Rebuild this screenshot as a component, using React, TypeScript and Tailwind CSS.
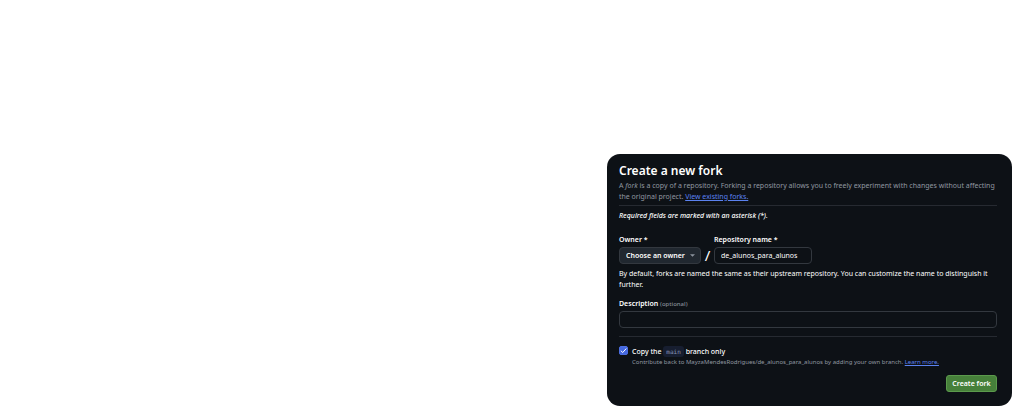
import { useState } from "react";

function Divider() {
  return <hr className="border-t border-[#262a31]" />;
}

function OwnerSelect() {
  return (
    <div className="relative">
      <select
        id="owner"
        defaultValue=""
        className="block h-[17px] w-[82px] appearance-none rounded-[4px] border border-[#33383f] bg-[#212830] px-[6px] text-[7px] leading-[15px] font-semibold text-white"
      >
        <option value="">Choose an owner</option>
      </select>
      <svg
        viewBox="0 0 6 3"
        className="pointer-events-none absolute top-[7px] right-[6px] h-[3px] w-[5px] fill-[#8b939d]"
        aria-hidden="true"
      >
        <path d="M0 0h6L3 3z" />
      </svg>
    </div>
  );
}

function BranchCheckbox() {
  const [checked, setChecked] = useState(true);
  return (
    <span className="relative block size-[9px] shrink-0">
      <input
        id="main-only"
        type="checkbox"
        checked={checked}
        onChange={(event) => setChecked(event.target.checked)}
        className="block size-[9px] appearance-none rounded-[2px] border border-[#4c6ee0] checked:bg-[#4468e0]"
      />
      {checked && (
        <svg
          viewBox="0 0 9 9"
          className="pointer-events-none absolute inset-0 size-[9px] fill-none stroke-white"
          aria-hidden="true"
        >
          <path d="M1.8 4.7 3.7 6.5 7.3 2.5" strokeWidth="1" />
        </svg>
      )}
    </span>
  );
}

export default function App() {
  return (
    <main className="flex min-h-screen items-start justify-end bg-white pt-[154px] font-['Noto_Sans','Open_Sans',sans-serif] text-[7px] leading-[11px] text-white">
      <form
        className="w-2/5 min-w-[405px] rounded-[13px] bg-[#0d1116] pt-[8px] pr-[15px] pb-[14px] pl-[12px]"
        onSubmit={(event) => event.preventDefault()}
      >
        <h1 className="text-[12px] leading-[18px] font-semibold">Create a new fork</h1>
        <p className="mb-[3px] text-[#9198a1]">
          A <em>fork</em> is a copy of a repository. Forking a repository allows you to freely experiment
          with changes without affecting the original project.{" "}
          <a href="#forks" className="text-[#5b82f0] underline">
            View existing forks.
          </a>
        </p>
        <Divider />
        <p className="mt-[4px] font-medium italic">Required fields are marked with an asterisk (*).</p>

        <div className="mt-[13px] flex items-end">
          <div>
            <label htmlFor="owner" className="mb-[2px] block font-semibold">
              Owner *
            </label>
            <OwnerSelect />
          </div>
          <span className="w-[13px] text-center text-[15px] leading-[17px]">/</span>
          <div>
            <label htmlFor="repo-name" className="mb-[2px] block font-semibold">
              Repository name *
            </label>
            <input
              id="repo-name"
              type="text"
              defaultValue="de_alunos_para_alunos"
              className="block h-[17px] w-[98px] rounded-[4px] border border-[#33383f] bg-[#0d1116] px-[6px] text-[7px] text-white"
            />
          </div>
        </div>
        <p className="mt-[4px]">
          By default, forks are named the same as their upstream repository. You can customize the name to
          distinguish it further.
        </p>

        <label htmlFor="description" className="mt-[8px] mb-px block font-semibold">
          Description <span className="text-[6px] font-medium text-[#868d96]">(optional)</span>
        </label>
        <input
          id="description"
          type="text"
          className="mb-[8px] block h-[17px] w-full rounded-[4px] border border-[#33383f] bg-[#0d1116] px-[6px] text-[7px] text-white"
        />
        <Divider />

        <div className="mt-[9px] flex items-start gap-[4px]">
          <BranchCheckbox />
          <div>
            <label htmlFor="main-only" className="block font-medium">
              Copy the{" "}
              <code className="rounded-[3px] bg-[#171e30] px-[3px] py-[2px] font-['DejaVu_Sans_Mono',monospace] text-[6px] font-normal text-[#8795b8]">
                main
              </code>{" "}
              branch only
            </label>
            <p className="text-[6px] text-[#9198a1]">
              Contribute back to MayzaMendesRodrigues/de_alunos_para_alunos by adding your own branch.{" "}
              <a href="#learn" className="text-[#5b82f0] underline">
                Learn more.
              </a>
            </p>
          </div>
        </div>

        <div className="mt-[7px] flex justify-end">
          <button
            type="submit"
            className="h-[17px] w-[51px] rounded-[3px] border border-[#5b9a4c] bg-[#46803a] text-[7px] leading-[15px] font-semibold"
          >
            Create fork
          </button>
        </div>
      </form>
    </main>
  );
}
